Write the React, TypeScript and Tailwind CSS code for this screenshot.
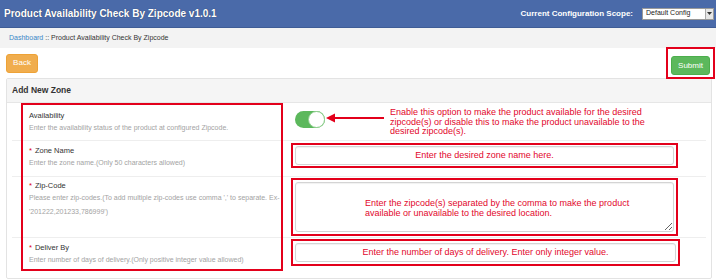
import React from 'react';

const red = 'border-[#e3001b]';

const Label = ({ text, req }: { text: string; req?: boolean }) => (
  <div className="text-[7.5px] leading-[10px] text-[#333]">
    {req && <span className="text-[#d9001b] mr-[3px]">*</span>}
    {text}
  </div>
);

const Help = ({ children }: { children: React.ReactNode }) => (
  <div className="text-[7px] leading-[14px] text-[#a3a3a3]">{children}</div>
);

const FakeInput = ({ text }: { text: string }) => (
  <div className="h-[19px] bg-white border border-[#d4d4d4] rounded-[3px] shadow-[inset_0_1px_1px_rgba(0,0,0,0.06)] flex items-center justify-center text-[9px] text-[#e2062c]">
    {text}
  </div>
);

export default function App() {
  return (
    <div className="w-[716px] h-[279px] overflow-hidden bg-white font-['Liberation_Sans',Arial,sans-serif]">
      {/* top bar */}
      <div className="h-[28px] bg-[#4a6aa9] border-b border-[#3f5d96] flex items-center justify-between pl-[4px] pr-[2px]">
        <div className="text-[10px] font-bold text-white [text-shadow:0_0_1px_rgba(0,0,0,0.5)]">
          Product Availability Check By Zipcode v1.0.1
        </div>
        <div className="flex items-center gap-[9px]">
          <span className="text-[8px] font-bold text-white">Current Configuration Scope:</span>
          <div className="w-[72px] h-[12px] bg-white border border-[#9a9a9a] flex items-center justify-between pl-[3px]">
            <span className="text-[7px] text-[#222]">Default Config</span>
            <span className="w-[8px] h-full bg-[#e6e6e6] border-l border-[#aaa] flex items-center justify-center">
              <svg width="5" height="3" viewBox="0 0 5 3"><path d="M0 0h5L2.5 3z" fill="#333" /></svg>
            </span>
          </div>
        </div>
      </div>

      {/* breadcrumb */}
      <div className="h-[20px] bg-[#f3f3f3] flex items-center pl-[9px] text-[7px] text-[#333]">
        <span className="text-[#3a87c8]">Dashboard</span>
        <span className="ml-[2px]">:: Product Availability Check By Zipcode</span>
      </div>

      {/* actions */}
      <div className="h-[30px] flex items-center justify-between pl-[6px] pr-[1px]">
        <button className="w-[32px] h-[19px] bg-[#f0ad4e] border border-[#eea236] rounded-[3px] text-[8px] text-white">
          Back
        </button>
        <div className={`border-2 ${red} px-[3px] py-[2px]`}>
          <button className="w-[39px] h-[19px] bg-[#5cb85c] border border-[#4cae4c] rounded-[3px] text-[8px] text-white">
            Submit
          </button>
        </div>
      </div>

      {/* panel */}
      <div className="ml-[6px] w-[706px] border border-[#e3e3e3] rounded-[2px]">
        <div className="h-[24px] bg-[#f5f5f5] border-b border-[#e6e6e6] flex items-center pl-[5px] text-[8.5px] font-bold text-[#333]">
          Add New Zone
        </div>
        <div className="relative px-[5px]">
          {/* row 1 */}
          <div className="grid grid-cols-[274px_1fr] h-[38px] border-b border-[#eeeeee]">
            <div className="pl-[17px] pt-[8px]">
              <Label text="Availability" />
              <Help>Enter the availability status of the product at configured Zipcode.</Help>
            </div>
            <div className="flex items-start">
              <div className="ml-[9px] mt-[8px] w-[30px] h-[17px] rounded-full bg-[#5cb85c] flex justify-end">
                <div className="w-[17px] h-[17px] rounded-full bg-white border border-[#8fcf8f]" />
              </div>
              <svg className="ml-[1px] mt-[10px]" width="58" height="10" viewBox="0 0 58 10">
                <path d="M0 5L9 0.5V9.5Z" fill="#e3001b" />
                <rect x="8" y="4" width="50" height="2" fill="#e3001b" />
              </svg>
              <div className="ml-[6px] mt-[5px] w-[266px] text-[9px] leading-[9.6px] text-[#e2062c]">
                Enable this option to make the product available for the desired zipcode(s) or disable this to make
                the product unavailable to the desired zipcode(s).
              </div>
            </div>
          </div>

          {/* row 2 */}
          <div className="grid grid-cols-[274px_1fr] h-[36px] border-b border-[#eeeeee]">
            <div className="pl-[17px] pt-[5px]">
              <Label text="Zone Name" req />
              <Help>Enter the zone name.(Only 50 characters allowed)</Help>
            </div>
            <div>
              <div className={`ml-[5px] mt-[2px] w-[387px] border-2 ${red} px-[2px] py-[1px]`}>
                <FakeInput text="Enter the desired zone name here." />
              </div>
            </div>
          </div>

          {/* row 3 */}
          <div className="grid grid-cols-[274px_1fr] h-[61px] border-b border-[#eeeeee]">
            <div className="pl-[17px] pt-[4px]">
              <Label text="Zip-Code" req />
              <Help>
                Please enter zip-codes.(To add multiple zip-codes use comma ',' to separate. Ex-
                <br />
                '201222,201233,786999')
              </Help>
            </div>
            <div>
              <div className={`ml-[5px] mt-[1px] w-[387px] border-2 ${red} px-[2px] py-[2px]`}>
                <textarea
                  readOnly
                  className="block w-full h-[50px] bg-white border border-[#d4d4d4] rounded-[3px] shadow-[inset_0_1px_1px_rgba(0,0,0,0.06)] pl-[69px] pr-[36px] pt-[15px] text-[9px] leading-[10px] text-[#e2062c] outline-none"
                  defaultValue="Enter the zipcode(s) separated by the comma to make the product available or unavailable to the desired location."
                />
              </div>
            </div>
          </div>

          {/* row 4 */}
          <div className="grid grid-cols-[274px_1fr] h-[40px]">
            <div className="pl-[17px] pt-[5px]">
              <Label text="Deliver By" req />
              <Help>Enter number of days of delivery.(Only positive integer value allowed)</Help>
            </div>
            <div>
              <div className={`ml-[5px] mt-[1px] w-[389px] border-2 ${red} px-[2px] py-[2px]`}>
                <FakeInput text="Enter the number of days of delivery. Enter only integer value." />
              </div>
            </div>
          </div>

          {/* annotation around the labels */}
          <div className={`absolute left-[14px] top-0 w-[262px] h-[168px] border-2 ${red} pointer-events-none`} />
        </div>
      </div>
    </div>
  );
}
